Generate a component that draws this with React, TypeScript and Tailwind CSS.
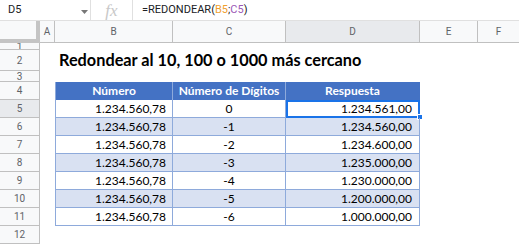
import React from "react";

const rows = [
  { n: 5, d: "0", r: "1.234.561,00" },
  { n: 6, d: "-1", r: "1.234.560,00" },
  { n: 7, d: "-2", r: "1.234.600,00" },
  { n: 8, d: "-3", r: "1.235.000,00" },
  { n: 9, d: "-4", r: "1.230.000,00" },
  { n: 10, d: "-5", r: "1.200.000,00" },
  { n: 11, d: "-6", r: "1.000.000,00" },
];

const hdrFont = { fontFamily: "Roboto, 'Liberation Sans', sans-serif" };
const cellFont = { fontFamily: "Lato, 'Open Sans', sans-serif" };

function RowHead({ n, h, sel }: { n: number; h: string; sel?: boolean }) {
  return (
    <div
      className={`w-[40px] shrink-0 ${h} border-r border-b border-[#c0c0c0] ${sel ? "bg-[#e8eaed]" : "bg-[#f8f9fa]"} flex items-center justify-center overflow-hidden text-[10px] text-[#5f6368]`}
      style={hdrFont}
    >
      {n}
    </div>
  );
}

export default function App() {
  return (
    <div className="w-[519px] h-[244px] overflow-hidden bg-white relative">
      {/* formula bar */}
      <div className="h-[21px] flex items-center border-b border-[#e0e0e0] bg-white" style={hdrFont}>
        <div className="w-[91px] h-full flex items-center pl-[8px] text-[11px] text-[#202124] relative border-r border-[#e0e0e0]">
          D5
          <svg className="absolute left-[81px] top-[10px]" width="7" height="4" viewBox="0 0 7 4">
            <path d="M0 0 L7 0 L3.5 4 Z" fill="#777" />
          </svg>
        </div>
        <div className="w-[42px] h-full flex items-center justify-center border-r border-[#e0e0e0]">
          <span className="italic text-[17px] text-[#c8c8c8] leading-none" style={{ fontFamily: "'Liberation Serif', serif" }}>
            fx
          </span>
        </div>
        <div className="pl-[9px] text-[11px] text-[#202124]">
          =REDONDEAR(<span className="text-[#f0a030]">B5</span>;<span className="text-[#9b59b6]">C5</span>)
        </div>
      </div>

      {/* column headers */}
      <div className="flex h-[22px] text-[10px] text-[#5f6368]" style={hdrFont}>
        <div className="w-[40px] shrink-0 h-full bg-[#f8f9fa] border-r-[4px] border-b-[4px] border-[#c4c4c4]" />
        <div className="w-[15px] shrink-0 h-full bg-[#f8f9fa] border-r border-b border-[#c0c0c0] flex items-center justify-center">A</div>
        <div className="w-[118px] shrink-0 h-full bg-[#f8f9fa] border-r border-b border-[#c0c0c0] flex items-center justify-center">B</div>
        <div className="w-[113px] shrink-0 h-full bg-[#f8f9fa] border-r border-b border-[#c0c0c0] flex items-center justify-center">C</div>
        <div className="w-[134px] shrink-0 h-full bg-[#e8eaed] border-r border-b border-[#c0c0c0] flex items-center justify-center">D</div>
        <div className="w-[58px] shrink-0 h-full bg-[#f8f9fa] border-r border-b border-[#c0c0c0] flex items-center justify-center">E</div>
        <div className="flex-1 h-full bg-[#f8f9fa] border-b border-[#c0c0c0] flex items-center justify-center">F</div>
      </div>

      {/* row 1 */}
      <div className="flex h-[7px]">
        <RowHead n={1} h="h-[7px]" />
      </div>
      {/* row 2 */}
      <div className="flex h-[21px]">
        <RowHead n={2} h="h-[21px]" />
        <div className="w-[15px] shrink-0" />
        <div className="pl-[4px] flex items-center whitespace-nowrap font-bold text-[16.3px] text-black" style={cellFont}>
          Redondear al 10, 100 o 1000 más cercano
        </div>
      </div>
      {/* row 3 */}
      <div className="flex h-[11px]">
        <RowHead n={3} h="h-[11px]" />
      </div>
      {/* row 4 header */}
      <div className="flex h-[18px]">
        <RowHead n={4} h="h-[18px]" />
        <div className="w-[15px] shrink-0" />
        <div className="flex text-white font-bold text-[12px]" style={cellFont}>
          <div className="w-[118px] h-[18px] bg-[#4472c4] border-l border-r border-[#8eaadb] flex items-center justify-center">Número</div>
          <div className="w-[113px] h-[18px] bg-[#4472c4] border-r border-[#8eaadb] flex items-center justify-center">Número de Dígitos</div>
          <div className="w-[134px] h-[18px] bg-[#4472c4] border-r border-[#4472c4] flex items-center justify-center">Respuesta</div>
        </div>
      </div>
      {rows.map((r, i) => (
        <div className="flex h-[18px]" key={r.n}>
          <RowHead n={r.n} h="h-[18px]" sel={r.n === 5} />
          <div className="w-[15px] shrink-0" />
          <div className={`flex text-[12px] text-black ${i % 2 === 1 ? "bg-[#d9e1f2]" : "bg-white"}`} style={cellFont}>
            <div className="w-[118px] h-[18px] border-l border-r border-b border-[#8eaadb] flex items-center justify-end pr-[6px]">1.234.560,78</div>
            <div className="w-[113px] h-[18px] border-r border-b border-[#8eaadb] flex items-center justify-center">{r.d}</div>
            <div className="w-[134px] h-[18px] border-r border-b border-[#8eaadb] flex items-center justify-end pr-[7px] relative">
              {r.r}
              {r.n === 5 && (
                <>
                  <div className="absolute left-0 top-0 w-[134px] h-[18px] border-2 border-[#1a73e8]" />
                  <div className="absolute left-[131px] top-[14px] w-[6px] h-[6px] bg-[#1a73e8] border border-white" />
                </>
              )}
            </div>
          </div>
        </div>
      ))}
      {/* row 12 */}
      <div className="flex h-[18px]">
        <RowHead n={12} h="h-[18px]" />
      </div>
    </div>
  );
}
